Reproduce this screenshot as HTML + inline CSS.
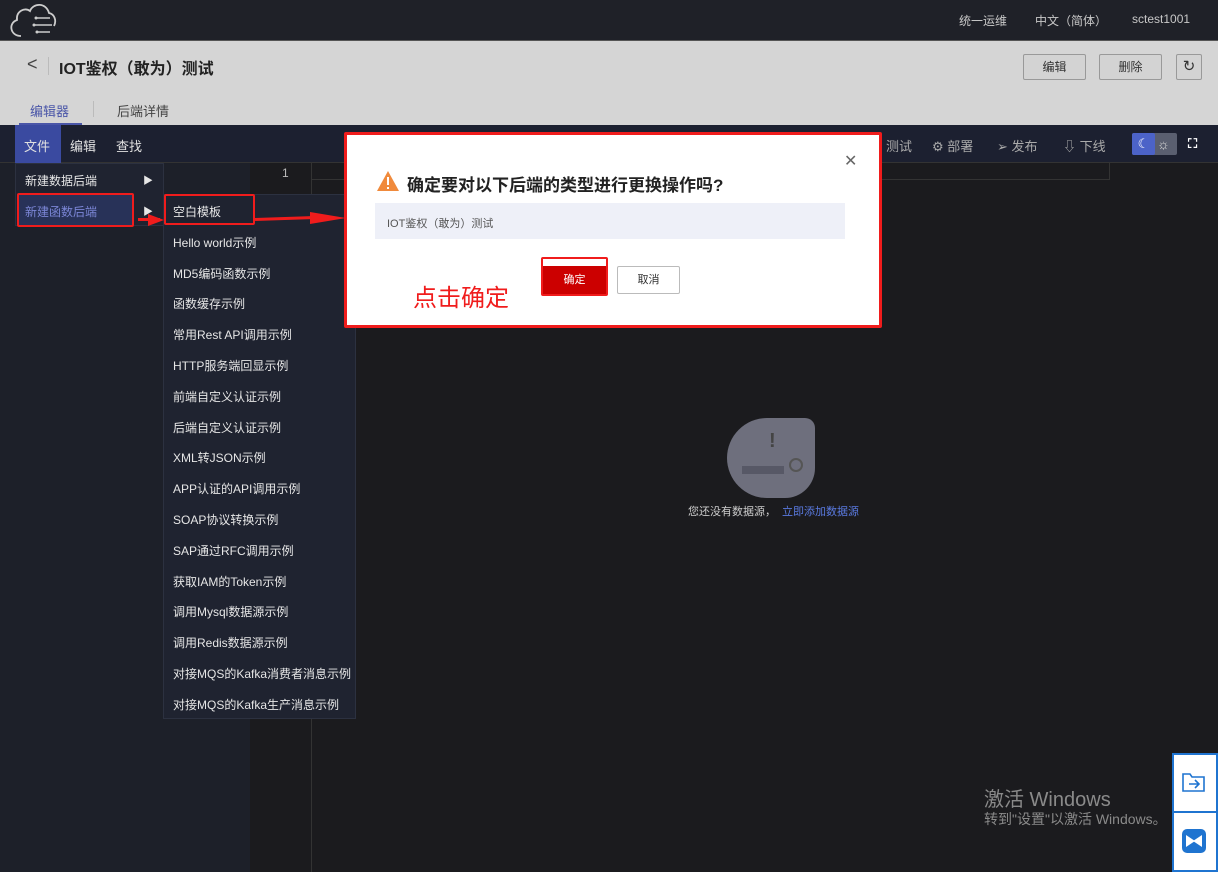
<!DOCTYPE html>
<html><head><meta charset="utf-8"><style>
*{margin:0;padding:0;box-sizing:border-box}
body{width:1218px;height:872px;overflow:hidden;background:#1b1b1e;font-family:"Liberation Sans","Noto Sans CJK SC",sans-serif;position:relative;color:#ddd}
.abs{position:absolute}
.top{left:0;top:0;width:1218px;height:40px;background:#1f2128}
.top span{position:absolute;top:12px;font-size:12px;color:#c8c8c8}
.hdr{left:0;top:40px;width:1218px;height:85px;background:#d5d5d5;border-top:1px solid #555}
.btn{position:absolute;border:1px solid #999;border-radius:2px;background:#d3d3d3;font-size:12px;color:#333;text-align:center;line-height:24px;height:26px}
.tb{left:0;top:125px;width:1218px;height:38px;background:#1c2030;border-bottom:1px solid #333}
.tb span{position:absolute;top:11px;font-size:13px;color:#e0e0e0}
.side{left:0;top:163px;width:250px;height:709px;background:#1d2029}
.menu{background:#1f2330;border:1px solid #2c3140}
.mi{position:absolute;font-size:12px;color:#e6e6e6;left:10px}
.red{position:absolute;border:2px solid #f01c1c;border-radius:2px}
</style></head><body>
<div class="abs top">
<svg class="abs" style="left:8px;top:1px" width="50" height="38" viewBox="0 0 50 38"><path d="M13 35 C2 35 0 22 9 19 C8 10 17 6 22 10 C25 2 38 1 41 12 C46 13 49 19 46 25" fill="none" stroke="#ccc" stroke-width="1.8"/><path d="M28 17h14M26 24h18M29 31h13" stroke="#ccc" stroke-width="1.5"/><circle cx="28" cy="17" r="1.5" fill="#ccc"/><circle cx="26" cy="24" r="1.5" fill="#ccc"/><circle cx="29" cy="31" r="1.5" fill="#ccc"/></svg>
<span style="left:959px">统一运维</span><span style="left:1035px">中文（简体）</span><span style="left:1132px">sctest1001</span>
</div>
<div class="abs hdr">
<div class="abs" style="left:27px;top:13px;font-size:18px;color:#444">&lt;</div>
<div class="abs" style="left:48px;top:16px;width:1px;height:18px;background:#bbb"></div>
<div class="abs" style="left:59px;top:14px;font-size:16px;font-weight:bold;color:#222">IOT鉴权（敢为）测试</div>
<div class="btn" style="left:1023px;top:13px;width:63px">编辑</div>
<div class="btn" style="left:1099px;top:13px;width:63px">删除</div>
<div class="btn" style="left:1176px;top:13px;width:26px;font-size:15px">↻</div>
<div class="abs" style="left:30px;top:60px;font-size:13px;color:#4a56a8">编辑器</div>
<div class="abs" style="left:19px;top:82px;width:63px;height:3px;background:#4a56a8"></div>
<div class="abs" style="left:93px;top:60px;width:1px;height:16px;background:#bbb"></div>
<div class="abs" style="left:117px;top:60px;font-size:13px;color:#444">后端详情</div>
</div>
<div class="abs tb">
<div class="abs" style="left:15px;top:0;width:46px;height:38px;background:#3a4aa0"></div>
<span style="left:24px">文件</span><span style="left:70px">编辑</span><span style="left:116px">查找</span>
<span style="left:886px;color:#aaa">测试</span><span style="left:932px;color:#aaa">⚙ 部署</span><span style="left:997px;color:#aaa">➢ 发布</span><span style="left:1063px;color:#aaa">⇩ 下线</span>
<div class="abs" style="left:1132px;top:8px;width:45px;height:22px;background:#5a5f70;border-radius:2px"><div style="width:23px;height:22px;background:#4c63c8;border-radius:2px;color:#fff;font-size:13px;text-align:center;line-height:22px">☾</div><div style="position:absolute;left:25px;top:0;font-size:14px;color:#ddd;line-height:22px">☼</div></div>
<span style="left:1188px;font-weight:bold;color:#fff">⛶</span>
</div>
<div class="abs side"></div>
<div class="abs" style="left:250px;top:163px;width:62px;height:709px;background:#1b1b1e;border-right:1px solid #333"></div>
<div class="abs" style="left:282px;top:166px;font-size:12px;color:#bbb">1</div>
<div class="abs" style="left:312px;top:179px;width:798px;height:1px;background:#333"></div>
<div class="abs" style="left:1109px;top:163px;width:1px;height:17px;background:#333"></div>
<div class="abs menu" style="left:15px;top:163px;width:149px;height:63px"></div>
<div class="mi" style="left:25px;top:172px">新建数据后端</div><div class="mi" style="left:143px;top:172px;font-size:10px">▶</div>
<div class="abs" style="left:19px;top:195px;width:113px;height:30px;background:#283258"></div>
<div class="mi" style="left:25px;top:203px;color:#7b86d6">新建函数后端</div><div class="mi" style="left:143px;top:203px;font-size:10px">▶</div>
<div class="red" style="left:17px;top:193px;width:117px;height:34px"></div>
<div class="abs menu" style="left:163px;top:194px;width:193px;height:525px"></div>
<div class="red" style="left:164px;top:194px;width:91px;height:31px"></div>
<div id="items"></div>
<div class="abs" style="left:138px;top:218px;width:22px;height:3px;background:#f01c1c"></div>
<div class="abs" style="left:255px;top:217px;width:60px;height:3px;background:#f01c1c;transform:rotate(-2deg)"></div>
<svg class="abs" style="left:300px;top:208px" width="46" height="20"><polygon points="10,4 46,10 10,16" fill="#f01c1c"/></svg>
<svg class="abs" style="left:148px;top:213px" width="16" height="14"><polygon points="0,1 16,7 0,13" fill="#f01c1c"/></svg>
<div class="abs" style="left:727px;top:418px;width:88px;height:80px;background:#6e6f7d;border-radius:40px 10px 30px 40px"></div>
<div class="abs" style="left:769px;top:430px;font-size:20px;color:#444;font-weight:bold">!</div>
<div class="abs" style="left:742px;top:466px;width:42px;height:8px;background:#575866"></div>
<div class="abs" style="left:789px;top:458px;width:14px;height:14px;border:2px solid #555;border-radius:50%"></div>
<div class="abs" style="left:688px;top:503px;font-size:11px;color:#ccc">您还没有数据源，<span style="color:#5a7ae0;margin-left:6px">立即添加数据源</span></div>
<div class="red" style="left:344px;top:132px;width:538px;height:196px;border-width:3px"></div>
<div class="abs" style="left:347px;top:135px;width:532px;height:190px;background:#fff"></div>
<div class="abs" style="left:844px;top:151px;font-size:16px;color:#666">✕</div>
<svg class="abs" style="left:376px;top:170px" width="24" height="22"><polygon points="12,1 23,21 1,21" fill="#f08a3c"/><rect x="11" y="7" width="2" height="8" fill="#fff"/><rect x="11" y="17" width="2" height="2" fill="#fff"/></svg>
<div class="abs" style="left:407px;top:171px;font-size:17px;color:#222;font-weight:bold">确定要对以下后端的类型进行更换操作吗?</div>
<div class="abs" style="left:375px;top:203px;width:470px;height:36px;background:#eef0f8"></div>
<div class="abs" style="left:387px;top:215px;font-size:11px;color:#555">IOT鉴权（敢为）测试</div>
<div class="abs" style="left:413px;top:278px;font-size:24px;color:#f01c1c">点击确定</div>
<div class="red" style="left:541px;top:257px;width:67px;height:39px"></div>
<div class="abs" style="left:543px;top:266px;width:63px;height:28px;background:#c00;color:#fff;font-size:11px;text-align:center;line-height:28px">确定</div>
<div class="abs" style="left:617px;top:266px;width:63px;height:28px;border:1px solid #bbb;border-radius:2px;color:#333;font-size:11px;text-align:center;line-height:26px">取消</div>
<div class="abs" style="left:984px;top:783px;font-size:20px;color:#8a8a8a">激活 Windows</div>
<div class="abs" style="left:984px;top:809px;font-size:14px;color:#8a8a8a">转到"设置"以激活 Windows。</div>
<div class="abs" style="left:1172px;top:753px;width:46px;height:119px;background:#fff;border:2px solid #1f74d0"></div>
<div class="abs" style="left:1172px;top:811px;width:46px;height:2px;background:#1f74d0"></div>
<svg class="abs" style="left:1182px;top:771px" width="24" height="22"><path d="M1 3h7l2 3h12v14H1z" fill="none" stroke="#1f74d0" stroke-width="1.6"/><path d="M7 13h10M13 9l4 4-4 4" fill="none" stroke="#1f74d0" stroke-width="1.6"/></svg>
<svg class="abs" style="left:1182px;top:829px" width="24" height="24"><rect width="24" height="24" rx="5" fill="#1f74d0"/><polygon points="4,6 13,12 4,18" fill="#fff"/><polygon points="20,6 11,12 20,18" fill="#fff"/></svg>
<script>
var t=["空白模板","Hello world示例","MD5编码函数示例","函数缓存示例","常用Rest API调用示例","HTTP服务端回显示例","前端自定义认证示例","后端自定义认证示例","XML转JSON示例","APP认证的API调用示例","SOAP协议转换示例","SAP通过RFC调用示例","获取IAM的Token示例","调用Mysql数据源示例","调用Redis数据源示例","对接MQS的Kafka消费者消息示例","对接MQS的Kafka生产消息示例"];
var h="";for(var i=0;i<t.length;i++){h+='<div class="mi" style="left:173px;top:'+(203+i*30.8)+'px">'+t[i]+'</div>';}
document.getElementById("items").innerHTML=h;
</script>
</body></html>
